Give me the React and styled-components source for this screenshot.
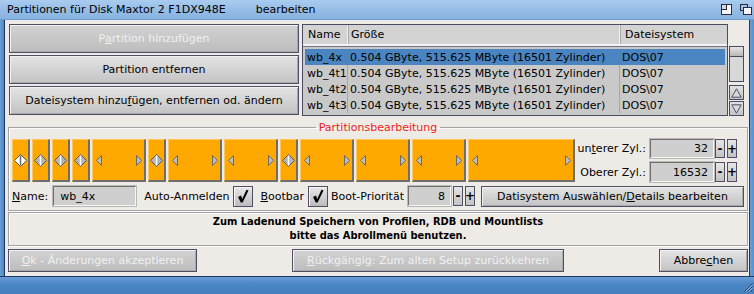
import React from 'react';
import styled, { createGlobalStyle } from 'styled-components';

const Global = createGlobalStyle`
  html, body { margin: 0; padding: 0; background: #4b87c5; }
  body { font-family: "DejaVu Sans", "Noto Sans", sans-serif; font-size: 11px; color: #000; }
  * { box-sizing: border-box; }
`;

const FONT = `"DejaVu Sans", "Noto Sans", sans-serif`;

const Window = styled.div`
  width: 754px;
  height: 294px;
  display: flex;
  flex-direction: column;
  background: #4b87c5;
  overflow: hidden;
`;

const TitleBar = styled.div`
  height: 20px;
  flex: none;
  display: flex;
  align-items: center;
  padding: 0 2px 0 7px;
  background: linear-gradient(#a9cbef, #86b1df);
  border-bottom: 1px solid #6f9cd0;
  font: 11px ${FONT};
  color: #000;
`;

const TitleText = styled.span`
  margin-right: ${p => p.$mr || 0}px;
  white-space: nowrap;
`;

const TitleGadgets = styled.div`
  margin-left: auto;
  display: flex;
  gap: 8px;
  align-items: center;
`;

const Middle = styled.div`
  flex: 1;
  display: flex;
  min-height: 0;
`;

const SideBorder = styled.div`
  width: ${p => p.$w}px;
  flex: none;
  background: linear-gradient(90deg, #6c9fd6, #4b87c5);
  border-${p => p.$side}: 1px solid #1c3766;
`;

const Content = styled.div`
  flex: 1;
  background: #eeebe7;
  padding: 4px 1px 0 3px;
  display: flex;
  flex-direction: column;
`;

const TopSection = styled.div`
  display: flex;
  height: 92px;
  margin: 0 2px 0 1px;
`;

const ButtonColumn = styled.div`
  width: 290px;
  display: flex;
  flex-direction: column;
  gap: 2px;
`;

const Btn = styled.div`
  height: ${p => p.$h || 29}px;
  width: ${p => (p.$w ? p.$w + 'px' : '100%')};
  flex: none;
  margin-left: ${p => p.$ml || 0}px;
  border: 1px solid #4e4e66;
  background: ${p => (p.$disabled ? 'linear-gradient(#d2d2d2, #bdbdbd)' : 'linear-gradient(#e4e4e4, #c3c3c3)')};
  box-shadow: inset 1px 1px 0 #f2f2f2, inset -1px -1px 0 #a9a9a9;
  font: 11px ${FONT};
  color: ${p => (p.$disabled ? '#f1f1f1' : '#000')};
  display: flex;
  align-items: center;
  justify-content: center;
  white-space: nowrap;
`;

const U = styled.span`
  text-decoration: underline;
`;

const Table = styled.div`
  width: 426px;
  margin-left: 3px;
  border: 1px solid #4a4a64;
  background: #c9c9c9;
  display: flex;
  flex-direction: column;
`;

const HeaderRow = styled.div`
  display: grid;
  grid-template-columns: 46px 272px 1fr;
  height: 21px;
  background: #d3d3d3;
  border-bottom: 2px solid #f2f2f2;
`;

const HeadCell = styled.div`
  display: flex;
  align-items: center;
  padding-left: ${p => p.$pl}px;
  border-right: ${p => (p.$last ? 'none' : '1px solid #a8a8a8')};
  box-shadow: ${p => (p.$last ? 'none' : 'inset -1px 0 0 #f0f0f0')};
`;

const Body = styled.div`
  flex: 1;
  padding: 2px 2px 0 2px;
  border-top: 1px solid #707088;
`;

const Row = styled.div`
  display: grid;
  grid-template-columns: 43px 272px 1fr;
  height: 16px;
  align-items: center;
  background: ${p => (p.$sel ? '#4a85c1' : 'transparent')};
`;

const Cell = styled.div`
  padding-left: ${p => p.$pl}px;
  white-space: nowrap;
  border-right: ${p => (p.$sep ? '1px solid #a6a6a6' : 'none')};
  height: 100%;
  display: flex;
  align-items: center;
`;

const Scroll = styled.div`
  width: 15px;
  margin-left: 1px;
  padding-top: 22px;
  display: flex;
  flex-direction: column;
`;

const Track = styled.div`
  height: 36px;
  border: 1px solid #4a4a64;
  background: #d8d8d8;
`;

const Knob = styled.div`
  height: 10px;
  background: linear-gradient(#e6e6e6, #b8b8b8);
  border-bottom: 1px solid #4a4a64;
`;

const ArrowBtn = styled.div`
  height: 15px;
  margin-top: ${p => p.$mt}px;
  border: 1px solid #4a4a64;
  background: linear-gradient(#e2e2e2, #c4c4c4);
  display: flex;
  align-items: center;
  justify-content: center;
`;

const Group = styled.fieldset`
  margin: 5px 0 0;
  padding: 4px 3px 4px 3px;
  border: 1px solid #a2a2a2;
  box-shadow: inset 1px 1px 0 #fbfbfb, 1px 1px 0 #fbfbfb;
  min-width: 0;
`;

const Legend = styled.legend`
  margin: 0 auto;
  padding: 0 3px;
  color: #ec1c1c;
  font: 11px ${FONT};
  line-height: 13px;
`;

const PartRow = styled.div`
  display: flex;
  height: 44px;
`;

const Bar = styled.div`
  display: flex;
  gap: 2px;
  width: 563px;
  flex: none;
  margin-top: 1px;
`;

const Segment = styled.div`
  width: ${p => p.$w}px;
  height: 43px;
  flex: none;
  background: #ffa800;
  border-left: 1px solid #ffc65a;
  border-top: 1px solid #ffc65a;
  border-right: 2px solid #6e6e6e;
  border-bottom: 2px solid #6e6e6e;
  display: flex;
  align-items: center;
  justify-content: ${p => (p.$small ? 'center' : 'space-between')};
  padding: ${p => (p.$small ? '0' : '0 2px 0 3px')};
  & > svg { flex: none; }
`;

const CylColumn = styled.div`
  flex: 1;
  display: flex;
  flex-direction: column;
  gap: 4px;
  margin-top: 1px;
`;

const CylRow = styled.div`
  display: flex;
  align-items: center;
  height: ${p => p.$h}px;
`;

const CylLabel = styled.div`
  width: 75px;
  text-align: right;
  padding-right: 4px;
  white-space: nowrap;
`;

const Field = styled.div`
  width: ${p => p.$w}px;
  height: ${p => p.$h || 20}px;
  flex: none;
  margin-left: ${p => p.$ml || 0}px;
  background: #cfcfcf;
  border: 1px solid;
  border-color: #707070 #f6f6f6 #f6f6f6 #707070;
  box-shadow: 0 0 0 1px #b8b8b8;
  display: flex;
  align-items: center;
  justify-content: ${p => (p.$right ? 'flex-end' : 'flex-start')};
  padding: 0 5px 0 6px;
  white-space: nowrap;
`;

const Step = styled.div`
  width: 10px;
  height: ${p => p.$h || 20}px;
  flex: none;
  margin-left: ${p => p.$ml || 2}px;
  border: 1px solid #4e4e66;
  background: linear-gradient(#e6e6e6, #c2c2c2);
  display: flex;
  align-items: center;
  justify-content: center;
  font: bold 12px "DejaVu Sans", sans-serif;
  line-height: 1;
  overflow: hidden;
`;

const NameRow = styled.div`
  display: flex;
  align-items: center;
  height: 20px;
  margin-top: 4px;
`;

const Label = styled.span`
  margin-left: ${p => p.$ml || 0}px;
  white-space: nowrap;
`;

const Check = styled.div`
  width: 20px;
  height: 21px;
  flex: none;
  margin-left: ${p => p.$ml || 0}px;
  border: 1px solid #4e4e66;
  background: linear-gradient(#e8e8e8, #bcbcbc);
  box-shadow: inset 1px 1px 0 #f6f6f6;
  display: flex;
  align-items: center;
  justify-content: center;
`;

const Message = styled.div`
  margin-top: 1px;
  height: 34px;
  border: 1px solid #a2a2a2;
  box-shadow: inset 1px 1px 0 #fbfbfb, 1px 1px 0 #fbfbfb;
  display: flex;
  flex-direction: column;
  align-items: center;
  justify-content: center;
  font: bold 11px "DejaVu Sans Condensed", "DejaVu Sans", sans-serif;
  line-height: 14px;
`;

const BottomRow = styled.div`
  display: flex;
  justify-content: space-between;
  margin-top: 3px;
`;

const BottomBorder = styled.div`
  height: 18px;
  flex: none;
  background: linear-gradient(#6c9fd6, #4b87c5 40%, #4680bd);
  border-top: 1px solid #1c3766;
  display: flex;
  justify-content: flex-end;
  align-items: flex-end;
  padding: 0 1px 2px 0;
`;

const Diamond = ({ sel }) => (
  <svg width="13" height="13" viewBox="0 0 13 13">
    <polygon points="6.5,0.5 12.5,6.5 6.5,12.5 0.5,6.5" fill={sel ? '#ffffff' : '#b4b4b4'} stroke="#5a5a5a" strokeWidth="1" />
    <line x1="6.5" y1="1.5" x2="6.5" y2="11.5" stroke={sel ? '#6a6a6a' : '#ffffff'} strokeWidth="1.5" />
  </svg>
);

const TriL = () => (
  <svg width="6" height="11" viewBox="0 0 6 11">
    <polygon points="5.5,0.5 0.5,5.5 5.5,10.5" fill="#bdbdbd" stroke="#6a6a6a" strokeWidth="1" />
  </svg>
);

const TriR = () => (
  <svg width="6" height="11" viewBox="0 0 6 11">
    <polygon points="0.5,0.5 5.5,5.5 0.5,10.5" fill="#bdbdbd" stroke="#6a6a6a" strokeWidth="1" />
  </svg>
);

const CheckMark = () => (
  <svg width="12" height="14" viewBox="0 0 12 14">
    <path d="M1 8 L4 6.5 L5.2 10 L9.5 0.8 L11.5 1.6 L5.6 13.5 L3.8 13.5 Z" fill="#000" />
  </svg>
);

const ZoomGadget = () => (
  <svg width="11" height="11" viewBox="0 0 11 11">
    <rect x="0.5" y="0.5" width="10" height="10" fill="#f4f6fa" stroke="#2a2a3a" />
    <rect x="0.5" y="0.5" width="5" height="5" fill="#f4f6fa" stroke="#2a2a3a" />
    <rect x="1" y="1" width="4" height="4" fill="#2a2a3a" opacity="0.15" />
  </svg>
);

const DepthGadget = () => (
  <svg width="12" height="11" viewBox="0 0 12 11">
    <rect x="0.5" y="0.5" width="7" height="6" fill="#9fc2ea" stroke="#2a2a3a" />
    <rect x="3.5" y="3.5" width="8" height="7" fill="#f4f6fa" stroke="#2a2a3a" />
  </svg>
);

const Resize = () => (
  <svg width="9" height="9" viewBox="0 0 9 9">
    <path d="M8.5 0.5 L0.5 8.5 M8.5 3.5 L3.5 8.5 M8.5 6.5 L6.5 8.5" stroke="#1c3766" strokeWidth="1" />
    <path d="M8.5 1.8 L1.8 8.5 M8.5 4.8 L4.8 8.5" stroke="#cfe0f4" strokeWidth="0.8" />
  </svg>
);

const UpArrow = () => (
  <svg width="11" height="10" viewBox="0 0 11 10">
    <polygon points="5.5,0.8 10.2,9.2 0.8,9.2" fill="#d8d8d8" stroke="#50506a" />
  </svg>
);

const DownArrow = () => (
  <svg width="11" height="10" viewBox="0 0 11 10">
    <polygon points="0.8,0.8 10.2,0.8 5.5,9.2" fill="#d8d8d8" stroke="#50506a" />
  </svg>
);

const segments = [
  { w: 18, s: true, sel: true },
  { w: 18, s: true },
  { w: 18, s: true },
  { w: 18, s: true },
  { w: 54 },
  { w: 18, s: true },
  { w: 54 },
  { w: 54 },
  { w: 18, s: true },
  { w: 54 },
  { w: 54 },
  { w: 54 },
  { w: 107 },
];

const rows = ['wb_4x', 'wb_4t1', 'wb_4t2', 'wb_4t3'];

export default function App() {
  return (
    <>
      <Global />
      <Window>
        <TitleBar>
          <TitleText $mr={30}>Partitionen für Disk Maxtor 2 F1DX948E</TitleText>
          <TitleText>bearbeiten</TitleText>
          <TitleGadgets>
            <ZoomGadget />
            <DepthGadget />
          </TitleGadgets>
        </TitleBar>
        <Middle>
          <SideBorder $w={5} $side="right" />
          <Content>
            <TopSection>
              <ButtonColumn>
                <Btn $disabled>
                  P<U>a</U>rtition hinzufügen
                </Btn>
                <Btn>Partition entfernen</Btn>
                <Btn>
                  Dateisystem hinzu<U>f</U>ügen, entfernen od. ändern
                </Btn>
              </ButtonColumn>
              <Table>
                <HeaderRow>
                  <HeadCell $pl={5}>Name</HeadCell>
                  <HeadCell $pl={2}>Größe</HeadCell>
                  <HeadCell $pl={4} $last>Dateisystem</HeadCell>
                </HeaderRow>
                <Body>
                  {rows.map((r, i) => (
                    <Row key={r} $sel={i === 0}>
                      <Cell $pl={2} $sep={i !== 0}>{r}</Cell>
                      <Cell $pl={2} $sep={i !== 0}>0.504 GByte, 515.625 MByte (16501 Zylinder)</Cell>
                      <Cell $pl={2}>DOS\07</Cell>
                    </Row>
                  ))}
                </Body>
              </Table>
              <Scroll>
                <Track>
                  <Knob />
                </Track>
                <ArrowBtn $mt={3}>
                  <UpArrow />
                </ArrowBtn>
                <ArrowBtn $mt={1}>
                  <DownArrow />
                </ArrowBtn>
              </Scroll>
            </TopSection>

            <Group>
              <Legend>Partitionsbearbeitung</Legend>
              <PartRow>
                <Bar>
                  {segments.map((s, i) => (
                    <Segment key={i} $w={s.w} $small={s.s}>
                      {s.s ? (
                        <Diamond sel={s.sel} />
                      ) : (
                        <>
                          <TriL />
                          <TriR />
                        </>
                      )}
                    </Segment>
                  ))}
                </Bar>
                <CylColumn>
                  <CylRow $h={19}>
                    <CylLabel>
                      un<U>t</U>erer Zyl.:
                    </CylLabel>
                    <Field $w={64} $h={19} $right>32</Field>
                    <Step $h={19} $ml={1}>-</Step>
                    <Step $h={19}>+</Step>
                  </CylRow>
                  <CylRow $h={20}>
                    <CylLabel>Oberer Zyl.:</CylLabel>
                    <Field $w={64} $h={20} $right>16532</Field>
                    <Step $h={20} $ml={1}>-</Step>
                    <Step $h={20}>+</Step>
                  </CylRow>
                </CylColumn>
              </PartRow>
              <NameRow>
                <Label>
                  <U>N</U>ame:
                </Label>
                <Field $w={83} $ml={5}>wb_4x</Field>
                <Label $ml={8}>Auto-Anmelden</Label>
                <Check $ml={4}>
                  <CheckMark />
                </Check>
                <Label $ml={7}>
                  <U>B</U>ootbar
                </Label>
                <Check $ml={4}>
                  <CheckMark />
                </Check>
                <Label $ml={3}>Boot-Priorität</Label>
                <Field $w={43} $ml={4} $right>8</Field>
                <Step $ml={2}>-</Step>
                <Step>+</Step>
                <Btn $h={21} $w={263} $ml={6}>
                  Datisystem Auswählen/<U>D</U>etails bearbeiten
                </Btn>
              </NameRow>
            </Group>

            <Message>
              <div>Zum Ladenund Speichern von Profilen, RDB und Mountlists</div>
              <div>bitte das Abrollmenü benutzen.</div>
            </Message>

            <BottomRow>
              <Btn $h={23} $w={189} $disabled>
                <U>O</U>k - Änderungen akzeptieren
              </Btn>
              <Btn $h={23} $w={272} $disabled>
                <U>R</U>ückgängig: Zum alten Setup zurückkehren
              </Btn>
              <Btn $h={23} $w={89}>
                Abbre<U>c</U>hen
              </Btn>
            </BottomRow>
          </Content>
          <SideBorder $w={7} $side="left" />
        </Middle>
        <BottomBorder>
          <Resize />
        </BottomBorder>
      </Window>
    </>
  );
}
